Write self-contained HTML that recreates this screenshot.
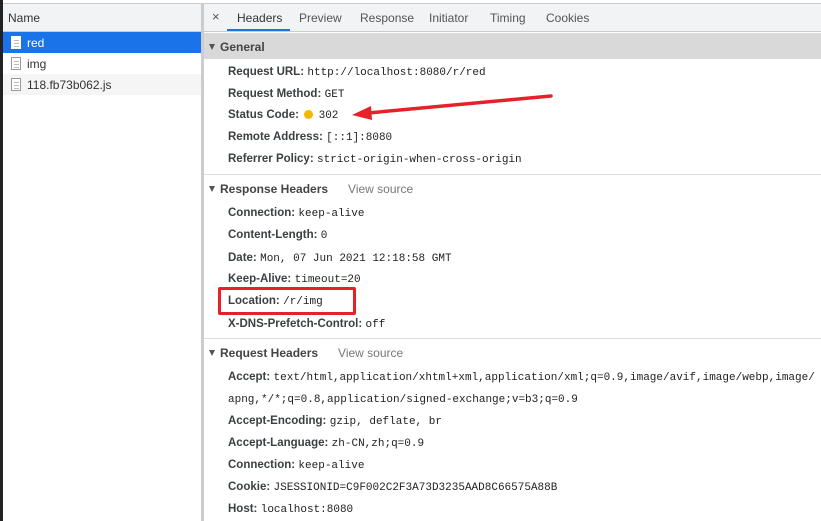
<!DOCTYPE html>
<html><head><meta charset="utf-8"><style>
*{margin:0;padding:0;box-sizing:border-box}
body{width:821px;height:521px;overflow:hidden;background:#fff;font-family:"Liberation Sans",sans-serif;font-size:12px;color:#303942;position:relative}
.a{position:absolute;white-space:nowrap}
.k{font-weight:bold;color:#3c4043;font-size:11.5px}
.v{font-family:"Liberation Mono",monospace;font-size:11px;color:#222}
.sec{font-weight:bold;color:#444;font-size:12px}
.vs{color:#777;font-weight:normal;margin-left:20px;font-size:12px}
.tri{display:inline-block;width:0;height:0;border-left:3.5px solid transparent;border-right:3.5px solid transparent;border-top:6px solid #555;margin-right:5px;vertical-align:1px}
.doc{position:absolute;width:10px;height:13px;border:1px solid #999;background:#fff}
.doc i{position:absolute;left:2px;width:5px;height:1px;background:#bbb}
</style></head><body>
<div class="a" style="left:0;top:0;width:3px;height:521px;background:#222"></div>
<div class="a" style="left:3px;top:0;width:818px;height:4px;background:#fff;border-bottom:1px solid #ccc"></div>
<!-- left panel -->
<div class="a" style="left:3px;top:4px;width:198px;height:28px;background:#f1f3f4;border-bottom:1px solid #ccc"></div>
<div class="a" style="left:8px;top:11px;color:#333">Name</div>
<div class="a" style="left:3px;top:32px;width:198px;height:21px;background:#1a73e8"></div>
<div class="a" style="left:3px;top:74px;width:198px;height:21px;background:#f5f5f5"></div>
<div class="doc" style="left:11px;top:36px;border-color:#fff"><i style="top:3px"></i><i style="top:6px"></i><i style="top:9px"></i></div>
<div class="doc" style="left:11px;top:57px"><i style="top:3px"></i><i style="top:6px"></i><i style="top:9px"></i></div>
<div class="doc" style="left:11px;top:78px"><i style="top:3px"></i><i style="top:6px"></i><i style="top:9px"></i></div>
<div class="a" style="left:27px;top:36px;color:#fff">red</div>
<div class="a" style="left:27px;top:57px;color:#333">img</div>
<div class="a" style="left:27px;top:78px;color:#333">118.fb73b062.js</div>
<div class="a" style="left:201px;top:4px;width:3px;height:517px;background:#ccc"></div>
<!-- tabs -->
<div class="a" style="left:204px;top:4px;width:617px;height:28px;background:#f1f3f4;border-bottom:1px solid #ccc"></div>
<div class="a" style="left:212px;top:9px;color:#555;font-size:13px">×</div>
<div class="a" style="left:237px;top:11px;color:#333">Headers</div>
<div class="a" style="left:227px;top:29px;width:63px;height:2px;background:#1a73e8"></div>
<div class="a" style="left:299px;top:11px;color:#555">Preview</div>
<div class="a" style="left:360px;top:11px;color:#555">Response</div>
<div class="a" style="left:429px;top:11px;color:#555">Initiator</div>
<div class="a" style="left:490px;top:11px;color:#555">Timing</div>
<div class="a" style="left:546px;top:11px;color:#555">Cookies</div>
<!-- General -->
<div class="a" style="left:204px;top:33px;width:617px;height:26px;background:#d9d9d9"></div>
<div class="a sec" style="left:209px;top:40px"><span class="tri"></span>General</div>
<div class="a" style="left:228px;top:64px"><span class="k">Request URL:</span> <span class="v">http://localhost:8080/r/red</span></div>
<div class="a" style="left:228px;top:86px"><span class="k">Request Method:</span> <span class="v">GET</span></div>
<div class="a" style="left:228px;top:107px"><span class="k">Status Code:</span> <span style="display:inline-block;width:9px;height:9px;border-radius:50%;background:#f5b800;vertical-align:-1px;margin:0 2px"></span> <span class="v">302</span></div>
<div class="a" style="left:228px;top:129px"><span class="k">Remote Address:</span> <span class="v">[::1]:8080</span></div>
<div class="a" style="left:228px;top:151px"><span class="k">Referrer Policy:</span> <span class="v">strict-origin-when-cross-origin</span></div>
<div class="a" style="left:204px;top:174px;width:617px;height:1px;background:#ddd"></div>
<!-- Response -->
<div class="a sec" style="left:209px;top:182px"><span class="tri"></span>Response Headers<span class="vs">View source</span></div>
<div class="a" style="left:228px;top:205px"><span class="k">Connection:</span> <span class="v">keep-alive</span></div>
<div class="a" style="left:228px;top:227px"><span class="k">Content-Length:</span> <span class="v">0</span></div>
<div class="a" style="left:228px;top:250px"><span class="k">Date:</span> <span class="v">Mon, 07 Jun 2021 12:18:58 GMT</span></div>
<div class="a" style="left:228px;top:271px"><span class="k">Keep-Alive:</span> <span class="v">timeout=20</span></div>
<div class="a" style="left:228px;top:293px"><span class="k">Location:</span> <span class="v">/r/img</span></div>
<div class="a" style="left:218px;top:287px;width:138px;height:28px;border:3px solid #e8202a;border-radius:2px"></div>
<div class="a" style="left:228px;top:316px"><span class="k">X-DNS-Prefetch-Control:</span> <span class="v">off</span></div>
<div class="a" style="left:204px;top:338px;width:617px;height:1px;background:#ddd"></div>
<!-- Request -->
<div class="a sec" style="left:209px;top:346px"><span class="tri"></span>Request Headers<span class="vs">View source</span></div>
<div class="a" style="left:228px;top:369px"><span class="k">Accept:</span> <span class="v">text/html,application/xhtml+xml,application/xml;q=0.9,image/avif,image/webp,image/</span></div>
<div class="a" style="left:228px;top:391px"><span class="v">apng,*/*;q=0.8,application/signed-exchange;v=b3;q=0.9</span></div>
<div class="a" style="left:228px;top:413px"><span class="k">Accept-Encoding:</span> <span class="v">gzip, deflate, br</span></div>
<div class="a" style="left:228px;top:435px"><span class="k">Accept-Language:</span> <span class="v">zh-CN,zh;q=0.9</span></div>
<div class="a" style="left:228px;top:457px"><span class="k">Connection:</span> <span class="v">keep-alive</span></div>
<div class="a" style="left:228px;top:479px"><span class="k">Cookie:</span> <span class="v">JSESSIONID=C9F002C2F3A73D3235AAD8C66575A88B</span></div>
<div class="a" style="left:228px;top:501px"><span class="k">Host:</span> <span class="v">localhost:8080</span></div>
<!-- arrow -->
<svg class="a" style="left:0;top:0" width="821" height="521"><line x1="551" y1="96" x2="368" y2="113" stroke="#e8202a" stroke-width="3.5" stroke-linecap="round"/><polygon points="352,115 371,106 372,120" fill="#e8202a"/></svg>
</body></html>
